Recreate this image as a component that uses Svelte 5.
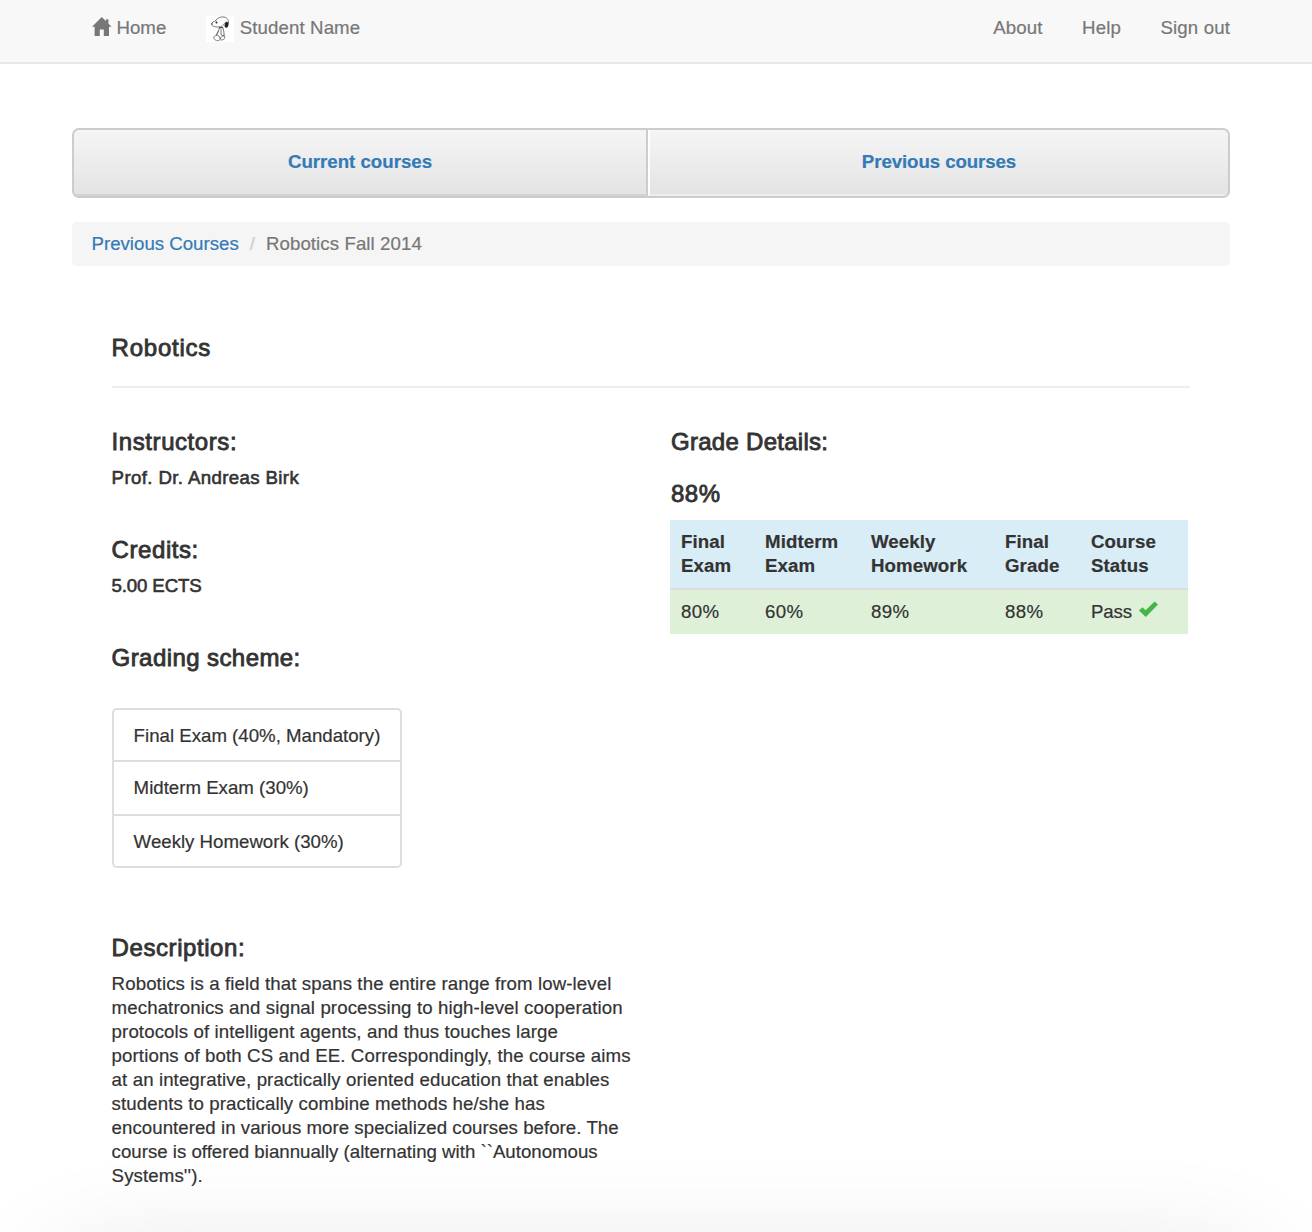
<script>
  const links = ['About', 'Help', 'Sign out'];
  const scheme = ['Final Exam (40%, Mandatory)', 'Midterm Exam (30%)', 'Weekly Homework (30%)'];
  const heads = [['Final', 'Exam'], ['Midterm', 'Exam'], ['Weekly', 'Homework'], ['Final', 'Grade'], ['Course', 'Status']];
  const grades = ['80%', '60%', '89%', '88%'];
  const description = [
    'Robotics is a field that spans the entire range from low-level',
    'mechatronics and signal processing to high-level cooperation',
    'protocols of intelligent agents, and thus touches large',
    'portions of both CS and EE. Correspondingly, the course aims',
    'at an integrative, practically oriented education that enables',
    'students to practically combine methods he/she has',
    'encountered in various more specialized courses before. The',
    'course is offered biannually (alternating with ``Autonomous',
    "Systems'')."
  ];
</script>

<div class="page">
  <nav class="navbar">
    <div class="left">
      <a class="home" href="#home">
        <svg class="house" width="20" height="20" viewBox="0 0 20 20"><path d="M9.8 0 L19.6 9.8 H17 V19 H11.8 V12.6 H7.8 V19 H2.6 V9.8 H0 Z M14 2.2 H16.4 V8 H14 Z" fill="#777" /></svg>
        <span>Home</span>
      </a>
      <a class="student" href="#student">
        <svg class="avatar" width="28" height="26" viewBox="0 0 28 26">
          <rect width="28" height="26" fill="#fff" />
          <g fill="none" stroke="#666" stroke-width="0.9" stroke-linecap="round" stroke-linejoin="round">
            <path d="M5.5 8 C5.5 6 8 5.5 10 4.5 C11 1.5 15 0.7 18 1 C21.5 1.5 23 4.5 22.5 8 M5.5 8 C5.5 10.5 9 11 12.5 11 C15.5 11 17.5 9.5 18.5 7.5" />
            <path d="M13.5 12 C12.5 15 11 16.5 10.5 19 M17 12 C17.5 15 18.5 17 18 19.5 M15 13.5 V18.5 L17.5 20 M12.5 15.5 L11 18 M10.5 19 C12.5 19 14 20.5 14 22 M10.5 19 C7 20 7 22.5 9.5 24 C12 25.5 15 24.5 14 22 M18 19.5 C16 20 15 21 14.5 22.5 M18 19.5 C20 21 18.5 24.5 15 24" />
          </g>
          <path d="M19.5 6 C22 4.5 23 8 22 10.5 C21 12.5 18.5 12 18.5 9.5 Z" fill="#222" />
          <circle cx="10.5" cy="6.6" r="1" fill="#222" /><circle cx="5.9" cy="8" r=".8" fill="#555" />
          <path d="M13 11.7 H17" stroke="#333" stroke-width="1.1" />
        </svg>
        <span>Student Name</span>
      </a>
    </div>
    <div class="right">
      {#each links as link}<a href="#{link}">{link}</a>{/each}
    </div>
  </nav>

  <main>
    <div class="tabs">
      <a class="tab first" href="#current">Current courses</a>
      <a class="tab last" href="#previous">Previous courses</a>
    </div>
    <div class="crumbs">
      <a href="#previous">Previous Courses</a><span class="slash">/</span><span class="here">Robotics Fall 2014</span>
    </div>

    <section class="course">
      <h4 class="title">Robotics</h4>
      <div class="columns">
        <div class="info">
          <h4>Instructors:</h4>
          <p class="value">Prof. Dr. Andreas Birk</p>
          <h4>Credits:</h4>
          <p class="value credits">5.00 ECTS</p>
          <h4 class="scheme">Grading scheme:</h4>
          <ul>
            {#each scheme as item}<li>{item}</li>{/each}
          </ul>
          <h4>Description:</h4>
          <p class="description">
            {#each description as line}<span>{line}</span>{/each}
          </p>
        </div>
        <div class="grades">
          <h4>Grade Details:</h4>
          <h4 class="total">88%</h4>
          <div class="table">
            <div class="row head">
              {#each heads as head}<div>{head[0]}<br />{head[1]}</div>{/each}
            </div>
            <div class="row body">
              {#each grades as grade}<div>{grade}</div>{/each}
              <div class="status">Pass <svg class="check" width="19" height="17" viewBox="0 0 19 17"><path d="M0 9.5 L3.4 6.2 L6.6 9.3 L15.6 0.4 L19 3.6 L6.8 15.9 Z" fill="#43b649" /></svg></div>
            </div>
          </div>
        </div>
      </div>
    </section>
  </main>
  <div class="shade"></div>
</div>

<style>
  :global(body) { background: #fff; }
  .page {
    position: relative;
    box-sizing: border-box;
    width: 1312px;
    height: 1232px;
    overflow: hidden;
    font: 18.67px/24px "Liberation Sans", Arial, sans-serif;
    color: #333;
    -webkit-text-stroke: 0.2px currentColor;
  }
  a { text-decoration: none; color: #337ab7; -webkit-text-stroke-color: #337ab7; }
  h4, p, ul { margin: 0; padding: 0; font-weight: 400; }
  .navbar {
    box-sizing: border-box;
    height: 64px;
    padding: 16px 82px 0 92px;
    display: flex;
    justify-content: space-between;
    background: #f8f8f8;
    border-bottom: 2px solid #e7e7e7;
  }
  .navbar a { display: flex; color: #777; -webkit-text-stroke-color: #777; }
  .left, .right { display: flex; height: 24px; }
  .left { gap: 39.5px; }
  .right { gap: 39.5px; letter-spacing: 0.13px; }
  .home { gap: 4.5px; }
  .house { margin-top: 1px; }
  .student { gap: 6px; letter-spacing: 0.1px; }
  main { padding: 64px 82px 0 72px; }
  .tabs {
    box-sizing: border-box;
    display: flex;
    height: 70px;
    border: 2px solid #ccc;
    border-radius: 7px;
    overflow: hidden;
    background: linear-gradient(#f5f5f5, #e3e3e3);
  }
  .tab { box-sizing: border-box; padding-top: 20px; text-align: center; font-weight: 700; letter-spacing: -0.08px; }
  .first { width: 574px; border-right: 2px solid #ccc; border-bottom: 2px solid #d2d2d2; letter-spacing: 0; }
  .last { flex: 1; border-left: 2px solid #fff; border-bottom: 2px solid #eee; }
  .crumbs {
    box-sizing: border-box;
    display: flex;
    height: 44px;
    margin-top: 24px;
    padding: 10px 19.5px;
    border-radius: 5px;
    background: #f5f5f5;
  }
  .slash { padding: 0 11px; color: #ccc; }
  .here { color: #777; letter-spacing: 0.08px; }
  .course { padding: 69px 40px 0; }
  h4 { font-size: 24px; line-height: 26px; letter-spacing: 0.57px; -webkit-text-stroke: 0.85px #333; }
  .info, .title { text-indent: -0.4px; }
  .title { height: 51px; border-bottom: 2px solid #eee; letter-spacing: 0.75px; }
  .columns { display: flex; padding-top: 41px; }
  .info { width: 559px; }
  .value { margin: 11px 0 47px; -webkit-text-stroke: 0.6px #333; letter-spacing: 0.37px; }
  .credits { letter-spacing: -0.15px; }
  .info .scheme { letter-spacing: 0.42px; }
  ul {
    box-sizing: border-box;
    width: 290px;
    height: 160px;
    margin: 37px 0 67px;
    border: 2px solid #ddd;
    border-radius: 5px;
    list-style: none;
  }
  li { box-sizing: border-box; height: 54px; padding: 14px 0 0 20px; border-top: 2px solid #ddd; white-space: nowrap; }
  li:first-child { height: 50px; border-top: 0; }
  .description { margin-top: 11px; letter-spacing: 0.1px; }
  .description span { display: block; white-space: nowrap; }
  .description span:nth-child(7) { letter-spacing: 0.04px; }
  .description span:nth-child(8) { letter-spacing: 0; }
  .grades { width: 518px; margin-left: -1px; }
  .grades h4 { padding-left: 1px; letter-spacing: 0.28px; }
  .grades .total { margin: 26px 0 13px; letter-spacing: 0.5px; }
  .row { display: grid; grid-template-columns: 84px 106px 134px 86px 108px; }
  .row div { padding: 10px 0 0 11px; }
  .head { height: 68px; background: #d9edf7; border-bottom: 2px solid #ddd; font-weight: 700; letter-spacing: 0.1px; }
  .body { height: 44px; background: #dff0d8; letter-spacing: 0.4px; }
  .body .status { letter-spacing: -0.1px; }
  .check { margin-left: 2px; }
  .shade {
    position: absolute;
    left: 70px;
    right: 70px;
    top: 1268px;
    height: 60px;
    box-shadow: 0 0 110px 10px rgba(0, 0, 0, 0.12);
  }
</style>
